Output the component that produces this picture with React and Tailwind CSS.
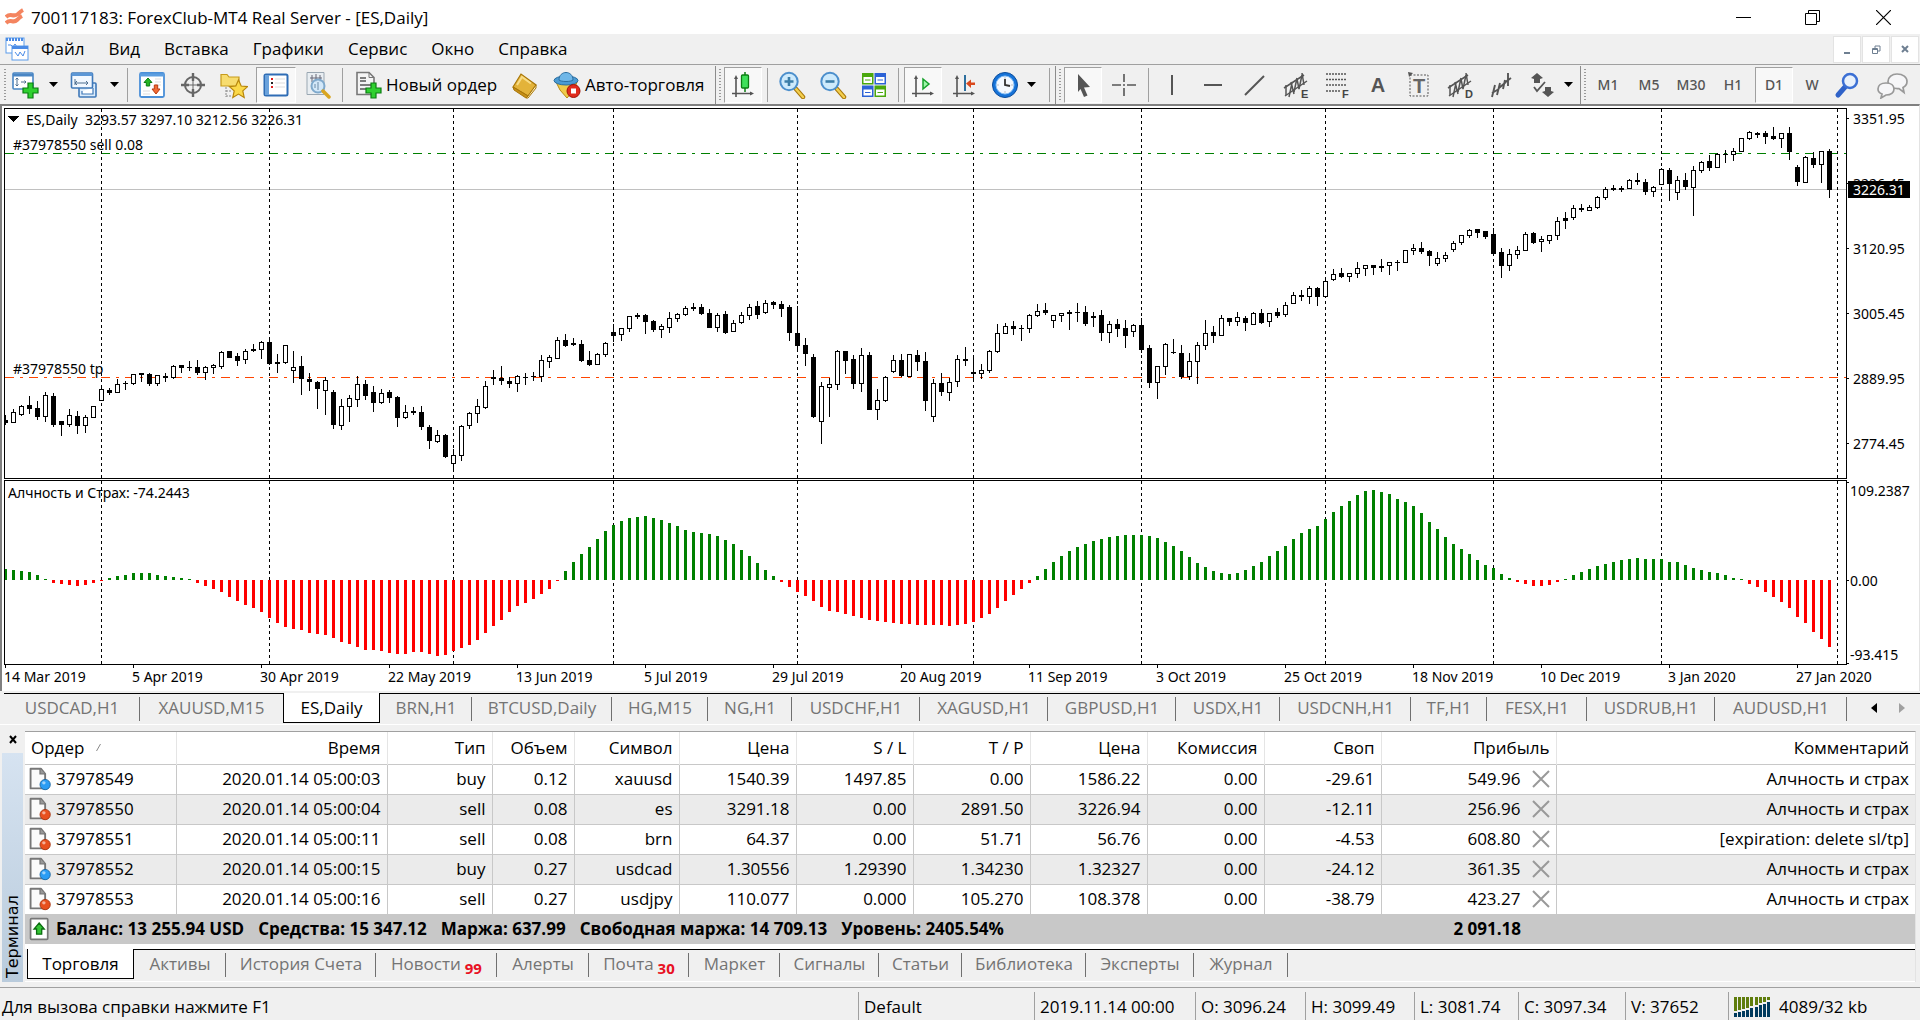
import { useState } from 'react';
import clsx from 'clsx';

// [high, bodyTop, bodyBottom, low, filled]
const CANDLES = [
  [415,420,423,425,1],[409,412,423,423,0],[405,406,415,416,0],[396,405,409,414,1],[401,408,417,420,1],[392,395,417,422,0],
  [393,396,425,427,1],[421,421,425,436,1],[409,415,425,427,0],[411,416,426,434,1],[415,417,426,433,0],[406,406,418,418,0],
  [387,389,401,401,0],[388,390,393,395,1],[379,384,393,393,0],[381,383,384,390,1],[374,374,384,385,0],[373,373,375,382,1],
  [373,374,384,386,1],[375,375,384,386,0],[373,376,378,382,1],[365,366,378,379,0],[365,365,368,373,1],[361,367,368,371,1],
  [360,367,373,375,1],[366,367,373,380,0],[364,365,368,374,0],[351,352,367,369,0],[351,351,358,358,1],[353,356,361,366,1],
  [349,351,360,364,0],[344,349,351,352,1],[341,342,350,359,0],[337,342,364,365,1],[354,362,364,373,1],[345,345,363,364,0],
  [351,367,371,383,0],[356,366,379,395,1],[373,379,382,391,1],[381,382,389,409,1],[377,380,391,415,0],[390,392,425,429,1],
  [399,406,426,430,0],[395,398,407,422,0],[376,384,400,407,0],[380,384,396,400,1],[386,392,403,412,1],[389,393,403,404,0],
  [390,392,398,403,1],[396,397,418,427,1],[405,412,418,419,0],[407,411,413,415,1],[406,412,427,430,1],[425,427,441,449,1],
  [430,435,442,443,0],[434,435,457,458,1],[449,455,464,470,0],[425,426,456,461,0],[412,413,426,429,0],[399,406,414,423,0],
  [381,386,408,409,0],[370,377,379,385,1],[366,378,381,385,1],[377,381,384,388,1],[375,376,384,392,0],[373,377,378,385,1],
  [372,376,377,381,1],[355,360,377,382,0],[355,357,362,368,0],[337,340,359,359,0],[334,340,346,347,1],[338,343,345,346,1],
  [340,344,361,362,1],[351,360,365,366,1],[353,354,365,365,0],[342,343,355,357,0],[324,332,336,342,1],[328,328,335,341,0],
  [316,316,329,332,0],[313,315,317,319,1],[314,315,322,334,1],[320,321,330,332,1],[324,326,330,338,0],[312,318,328,333,0],
  [313,314,319,322,0],[306,308,315,316,0],[303,307,309,311,1],[304,307,314,315,1],[309,313,328,328,1],[313,315,328,332,0],
  [311,314,333,334,1],[320,323,332,332,0],[312,315,323,324,0],[304,307,316,320,0],[301,306,315,319,1],[300,303,313,314,0],
  [301,302,305,309,1],[301,304,309,317,1],[305,307,333,341,1],[306,333,346,350,1],[338,345,354,366,1],[354,357,417,418,1],
  [382,386,422,444,0],[378,384,388,417,0],[350,351,385,390,0],[351,351,361,374,1],[355,359,384,389,1],[348,355,384,392,0],
  [352,355,410,410,1],[389,400,410,420,0],[376,377,401,402,0],[355,360,372,373,0],[354,360,376,377,1],[354,354,377,377,0],
  [350,355,362,371,1],[352,361,401,411,1],[379,383,417,422,0],[373,383,392,396,1],[378,382,393,401,0],[355,359,382,387,0],
  [347,359,361,366,1],[358,372,374,379,1],[364,370,374,379,0],[350,351,371,373,0],[324,333,352,353,0],[323,326,334,334,0],
  [321,326,329,335,1],[325,328,329,341,1],[314,315,329,333,0],[304,311,316,317,0],[303,310,313,315,1],[315,315,321,328,0],
  [313,313,316,322,0],[310,312,314,330,1],[303,312,313,322,1],[306,312,324,326,1],[312,316,318,327,1],[310,315,333,341,1],
  [321,324,333,343,0],[319,324,329,337,1],[320,328,336,348,1],[324,325,332,337,0],[318,325,350,353,1],[345,348,383,388,1],
  [366,366,383,399,0],[343,344,367,375,0],[339,352,353,354,1],[345,353,377,379,1],[353,361,377,380,0],[342,345,362,384,0],
  [320,333,346,350,0],[326,332,336,343,1],[315,318,336,336,0],[318,318,322,326,1],[312,317,322,326,0],[316,318,323,331,1],
  [312,313,325,325,0],[309,313,323,324,1],[313,313,322,327,0],[308,312,316,318,1],[302,305,315,317,0],[292,295,304,304,0],
  [290,295,297,301,1],[286,288,297,304,0],[287,288,297,306,1],[280,281,297,298,0],[269,274,280,281,0],[268,273,277,278,1],
  [273,273,277,282,0],[262,268,274,278,0],[265,265,269,276,0],[265,265,268,275,1],[259,266,268,272,1],[262,262,266,275,0],
  [260,262,263,271,1],[250,250,263,263,0],[244,248,251,255,0],[242,248,252,254,1],[250,251,256,266,1],[252,258,264,266,0],
  [252,255,259,262,0],[241,243,250,252,0],[235,235,243,245,0],[229,230,236,238,0],[229,229,233,238,1],[231,231,237,239,1],
  [228,234,254,255,1],[248,252,266,278,1],[249,254,266,271,0],[246,250,255,259,0],[232,234,251,251,0],[232,233,243,244,1],
  [236,239,242,252,0],[235,235,241,244,0],[217,221,236,240,0],[212,218,221,229,1],[205,208,218,220,0],[204,208,210,212,1],
  [205,207,211,211,0],[196,197,208,209,0],[187,189,198,200,0],[185,188,190,191,1],[186,188,190,192,1],[179,180,189,189,0],
  [173,180,182,185,1],[179,182,192,195,1],[186,187,192,197,0],[168,169,185,185,0],[168,170,184,201,1],[176,180,193,200,0],
  [173,180,187,190,1],[166,170,188,216,0],[161,162,171,173,0],[155,161,168,171,1],[153,154,168,168,0],[150,154,155,163,1],
  [148,151,155,161,0],[138,138,152,152,0],[131,132,139,140,0],[132,133,135,138,1],[131,133,137,144,1],[127,136,139,140,1],
  [133,133,139,148,0],[127,133,152,160,1],[165,167,182,186,1],[156,157,183,183,0],[152,158,165,168,1],[151,151,165,183,0],
  [149,151,190,198,1],
];

const HISTOGRAM = [
  11,10,9,8,5,1,-3,-4,-5,-6,-5,-3,-1,2,4,5,7,7,7,5,4,3,2,1,-3,-6,-9,-12,-17,-21,-25,-28,-32,-38,-43,-47,-49,-50,-53,-54,
  -55,-58,-62,-64,-67,-70,-70,-71,-73,-74,-74,-72,-72,-74,-76,-75,-71,-68,-65,-60,-53,-46,-40,-32,-26,-23,-19,-14,-9,-1,
  9,18,26,33,41,49,55,59,62,63,64,62,60,57,54,50,48,47,46,44,40,36,30,24,17,10,4,-2,-7,-12,-16,-21,-27,-31,-32,-34,-36,
  -38,-40,-41,-42,-43,-44,-44,-45,-45,-45,-45,-46,-45,-44,-42,-38,-34,-28,-21,-15,-9,-3,4,11,18,24,29,33,36,39,41,43,44,45,45,
  45,44,42,38,34,29,23,17,13,9,7,6,7,10,14,18,24,29,34,41,47,51,54,61,68,74,79,85,89,90,88,86,81,78,74,67,58,51,43,36,
  31,26,20,15,12,6,2,-2,-4,-6,-6,-5,-2,1,5,8,11,14,16,18,20,21,22,21,21,21,18,18,15,12,10,8,7,5,2,1,-4,-7,-12,-17,-22,
  -28,-37,-43,-52,-59,-67,
];

const PERIODS = [12, 33, 56, 76, 99, 121, 142, 165, 186, 207, 229];
const PRICES = [['3351.95', 118], ['3226.45', 183], ['3120.95', 248], ['3005.45', 313], ['2889.95', 378], ['2774.45', 443]];
const DATES = ['14 Mar 2019', '5 Apr 2019', '30 Apr 2019', '22 May 2019', '13 Jun 2019', '5 Jul 2019', '29 Jul 2019', '20 Aug 2019',
  '11 Sep 2019', '3 Oct 2019', '25 Oct 2019', '18 Nov 2019', '10 Dec 2019', '3 Jan 2020', '27 Jan 2020'];

const MENU = ['Файл', 'Вид', 'Вставка', 'Графики', 'Сервис', 'Окно', 'Справка'];

const CHART_TABS = [
  ['USDCAD,H1', 'w-[136px]'], ['XAUUSD,M15', 'w-[143px]'], ['ES,Daily', 'w-[97px]'], ['BRN,H1', 'w-[92px]'],
  ['BTCUSD,Daily', 'w-[140px]'], ['HG,M15', 'w-[96px]'], ['NG,H1', 'w-[84px]'], ['USDCHF,H1', 'w-[128px]'],
  ['XAGUSD,H1', 'w-[128px]'], ['GBPUSD,H1', 'w-[128px]'], ['USDX,H1', 'w-[104px]'], ['USDCNH,H1', 'w-[131px]'],
  ['TF,H1', 'w-[76px]'], ['FESX,H1', 'w-[100px]'], ['USDRUB,H1', 'w-[128px]'], ['AUDUSD,H1', 'w-[132px]'],
];

const TERMINAL_TABS = [
  ['Торговля', 'w-[107px]'], ['Активы', 'w-[92px]'], ['История Счета', 'w-[150px]'], ['Новости', 'w-[121px]', '99'],
  ['Алерты', 'w-[92px]'], ['Почта', 'w-[100px]', '30'], ['Маркет', 'w-[91px]'], ['Сигналы', 'w-[99px]'],
  ['Статьи', 'w-[83px]'], ['Библиотека', 'w-[124px]'], ['Эксперты', 'w-[108px]'], ['Журнал', 'w-[94px]'],
];

const COLUMNS = [
  ['Ордер', 'w-[151px]'], ['Время', 'w-[211px]'], ['Тип', 'w-[105px]'], ['Объем', 'w-[82px]'], ['Символ', 'w-[105px]'],
  ['Цена', 'w-[117px]'], ['S / L', 'w-[117px]'], ['T / P', 'w-[117px]'], ['Цена', 'w-[117px]'], ['Комиссия', 'w-[117px]'],
  ['Своп', 'w-[117px]'], ['Прибыль', 'w-[175px]'], ['Комментарий', ''],
];

const ORDERS = [
  ['37978549', '2020.01.14 05:00:03', 'buy', '0.12', 'xauusd', '1540.39', '1497.85', '0.00', '1586.22', '0.00', '-29.61', '549.96', 'Алчность и страх'],
  ['37978550', '2020.01.14 05:00:04', 'sell', '0.08', 'es', '3291.18', '0.00', '2891.50', '3226.94', '0.00', '-12.11', '256.96', 'Алчность и страх'],
  ['37978551', '2020.01.14 05:00:11', 'sell', '0.08', 'brn', '64.37', '0.00', '51.71', '56.76', '0.00', '-4.53', '608.80', '[expiration: delete sl/tp]'],
  ['37978552', '2020.01.14 05:00:15', 'buy', '0.27', 'usdcad', '1.30556', '1.29390', '1.34230', '1.32327', '0.00', '-24.12', '361.35', 'Алчность и страх'],
  ['37978553', '2020.01.14 05:00:16', 'sell', '0.27', 'usdjpy', '110.077', '0.000', '105.270', '108.378', '0.00', '-38.79', '423.27', 'Алчность и страх'],
];

/* ---------- Icons ---------- */

const Svg = ({ size = 'size-7', children }) => (
  <svg viewBox="0 0 28 28" className={clsx('block shrink-0', size)} fill="none" aria-hidden="true">{children}</svg>
);

const plus = <path d="M17 12h5v5h5v5h-5v5h-5v-5h-5v-5h5z" fill="#2fd02f" stroke="#0b7d12" strokeWidth="1.2" />;
const axes = (
  <g stroke="#555" strokeWidth="1.6" fill="#555">
    <path d="M7 26V6M3 22.500H23" fill="none" />
    <path d="M7 4l-2 4h4zM25 22.500l-4-2v4z" stroke="none" />
  </g>
);
const channel = (
  <g stroke="#555" strokeWidth="1.5">
    <path d="M2 17L22 4M3 25L25 10" />
    <path d="M4 14v10M7 26l3-14M9 11l3 12M12 21l3-14M15 8l2 10M17 18l3-14M20 2l2 12" />
  </g>
);

const NewChartIcon = () => (
  <Svg>
    <rect x="2" y="2" width="20" height="16" rx="1" fill="#fff" stroke="#4a86c4" strokeWidth="1.6" />
    <path d="M2 4h20" stroke="#4a86c4" strokeWidth="3" />
    <path d="M6 7v8M4.500 8.500L6 7l1.500 1.500M4.500 13.500L6 15l1.500-1.500M10 11h5M13.500 9.500L15 11l-1.500 1.500" stroke="#4f6f8f" />
    {plus}
  </Svg>
);
const ProfilesIcon = () => (
  <Svg>
    <rect x="9" y="12" width="17" height="14" rx="1" fill="#dcecfb" stroke="#3f78b8" strokeWidth="1.6" />
    <path d="M12 20v3h11v-6" stroke="#3f78b8" strokeWidth="1.2" fill="#fff" />
    <rect x="1.500" y="2" width="21" height="15" rx="1" fill="#f2f8ff" stroke="#3f78b8" strokeWidth="1.600" />
    <path d="M1.500 3.500h21" stroke="#5c97d6" strokeWidth="3" />
    <path d="M5 8v6M5 12h13M16 10l2 2-2 2M7 10l-2 2 2 2" stroke="#4f6f8f" />
  </Svg>
);
const MarketIcon = () => (
  <Svg>
    <rect x="2" y="2" width="24" height="24" rx="1.500" fill="#fff" stroke="#4a8fd8" strokeWidth="1.800" />
    <path d="M2 4h24" stroke="#5c9ee0" strokeWidth="3" />
    <path d="M17 8h6M17 11h6M5 20h7M5 23h7M17 14h6" stroke="#ddd" />
    <path d="M10 7l4 4.500h-2.300v3.500H8.300v-3.500H6z" fill="#25b525" stroke="#0b7d12" />
    <path d="M16.300 14h3.400v4h2.300l-4 5-4-5h2.300z" fill="#f06a35" stroke="#b83a10" />
  </Svg>
);
const CrosshairIcon = () => (
  <Svg>
    <circle cx="14" cy="14" r="8" stroke="#666" strokeWidth="2" />
    <path d="M14 2v8M14 18v8M2 14h8M18 14h8" stroke="#666" strokeWidth="2.400" />
    <path d="M14 10v8M10 14h8" stroke="#666" />
  </Svg>
);
const NavigatorIcon = () => (
  <Svg>
    <path d="M1 3.500h6l2 2.500h10v9H1z" fill="#f7dc6f" stroke="#c79b1b" strokeWidth="1.200" />
    <path d="M6 16v10M6 20h6M6 25h6" stroke="#888" strokeDasharray="2 1" />
    <path d="M18.500 9l2.700 6 6.300.6-4.700 4.300 1.400 6.600-5.700-3.400-5.700 3.400 1.400-6.600-4.700-4.300 6.300-.6z" fill="#fbd94a" stroke="#b8860b" strokeWidth="1.200" />
  </Svg>
);
const TerminalIcon = () => (
  <Svg>
    <rect x="2.500" y="3.500" width="23" height="21" rx="1.500" fill="#fff" stroke="#2f6db5" strokeWidth="2" />
    <path d="M5 4v20" stroke="#6aa2dc" strokeWidth="4" />
    <path d="M9 8h2M9 16h2" stroke="#e02020" strokeWidth="2" />
    <path d="M9 12h2" stroke="#222" strokeWidth="2" />
    <path d="M13 8h10M13 12h10M13 16h10" stroke="#ddd" />
  </Svg>
);
const TesterIcon = () => (
  <Svg>
    <path d="M3 1.500h17v22H3z" fill="#e9eef2" stroke="#9aa7b2" />
    <path d="M8 4v7M12 3v8M16 4v7M6 7h12" stroke="#667" />
    <circle cx="14" cy="15" r="6.500" fill="#cfe6fa" fillOpacity=".85" stroke="#7fa9cc" strokeWidth="2" />
    <path d="M14 11v8M11 13v4" stroke="#6d8aa5" />
    <path d="M19 20l6 6" stroke="#d9a520" strokeWidth="3.500" strokeLinecap="round" />
  </Svg>
);
const NewOrderIcon = () => (
  <Svg>
    <path d="M3 1.500h12l5 5v17H3z" fill="#f4f4f4" stroke="#777" strokeWidth="1.600" />
    <path d="M15 1.500v5h5" stroke="#777" />
    <path d="M6 7h6M6 10h6M6 14h11M6 18h6" stroke="#555" strokeWidth="1.600" />
    {plus}
  </Svg>
);
const EditorIcon = () => (
  <Svg>
    <path d="M2 16L10 3l15 11-8 11z" fill="#e3b33a" stroke="#a87608" strokeWidth="1.200" />
    <path d="M2 16l1 3 12 8 2-2z" fill="#c68f17" stroke="#a87608" />
    <path d="M15 27l2-2 8-11v3l-8 10z" fill="#fff3c4" stroke="#a87608" />
    <path d="M6 14l5-8 9 6.500" stroke="#f8dc86" strokeWidth="2" />
  </Svg>
);
const ExpertIcon = () => (
  <Svg>
    <path d="M3 11h21l-3 8-7 8-7-8z" fill="#f0cb4a" stroke="#b98a12" />
    <ellipse cx="13" cy="9.500" rx="12" ry="4.500" fill="#4b9bd3" stroke="#2b6ea0" />
    <path d="M6 9c0-10 14-10 14 0-2 2-12 2-14 0z" fill="#6fb7e8" stroke="#2b6ea0" />
    <circle cx="20.500" cy="20" r="6.500" fill="#e02b1d" stroke="#a01208" />
    <rect x="18" y="17.500" width="5" height="5" fill="#fff" />
  </Svg>
);
const CandleIcon = () => (
  <Svg>
    {axes}
    <path d="M16 1v20" stroke="#0b7d12" strokeWidth="1.500" />
    <rect x="12.500" y="4" width="7" height="13" rx="1" fill="#3fe05a" stroke="#0b7d12" strokeWidth="1.300" />
  </Svg>
);
const ZoomIcon = ({ sign }) => (
  <Svg>
    <path d="M18 18l7 8" stroke="#a87608" strokeWidth="4.500" strokeLinecap="round" />
    <path d="M18 18l7 8" stroke="#f3cf4f" strokeWidth="2.500" strokeLinecap="round" />
    <circle cx="11" cy="10.500" r="8.700" fill="#cdeafc" stroke="#4c8fcc" strokeWidth="2" />
    <path d={sign} stroke="#3c7ea8" strokeWidth="2.600" />
  </Svg>
);
const TileIcon = () => (
  <Svg>
    {[[2, 2, '#4aa80c'], [14.500, 2, '#2c62d6'], [2, 14.500, '#2c62d6'], [14.500, 14.500, '#4aa80c']].map(([x, y, c]) => (
      <g key={`${x}-${y}`}>
        <rect x={x} y={y} width="11.500" height="11.500" fill={c} />
        <rect x={x + 1.500} y={y + 4} width="8.500" height="6" fill="#fff" />
        <path d={`M${x + 3} ${y + 7}h5.500`} stroke={c} />
      </g>
    ))}
  </Svg>
);
const ScrollIcon = () => (
  <Svg>{axes}<path d="M14 8l6 5-6 5z" fill="#9df5a8" stroke="#15a02a" strokeWidth="1.500" /></Svg>
);
const ShiftIcon = () => (
  <Svg>
    {axes}
    <path d="M15 4v16" stroke="#2d6f9e" strokeWidth="2" />
    <path d="M16 12.500l5-4v3h4v2.500h-4v3z" fill="#d9481c" />
  </Svg>
);
const ClockIcon = () => (
  <Svg>
    <circle cx="14" cy="14" r="12.500" fill="#1673d8" stroke="#0b4c9c" />
    <circle cx="14" cy="14" r="9" fill="#f4f9ff" stroke="#8fc3f5" />
    <path d="M14 8v6l5 1" stroke="#333" strokeWidth="1.800" />
    <path d="M14 6.500v1M14 20.500v1M6.500 14h1M20.500 14h1" stroke="#888" />
  </Svg>
);
const CursorIcon = () => <Svg><path d="M9 3l12 13-6 .5 3.500 8-3.500 1.500-3.500-8L9 21z" fill="#555" /></Svg>;
const CrossIcon = () => <Svg><path d="M14 3v8M14 17v8M2 14h9M17 14h9M13 14h2" stroke="#555" strokeWidth="1.600" /></Svg>;
const VLineIcon = () => <Svg><path d="M13 4v20" stroke="#555" strokeWidth="2" /></Svg>;
const HLineIcon = () => <Svg><path d="M4 14h18" stroke="#555" strokeWidth="2" /></Svg>;
const TrendIcon = () => <Svg><path d="M4 24L23 5" stroke="#555" strokeWidth="2" /></Svg>;
const Letter = ({ children }) => (
  <text x="19" y="27" fontSize="11" fontWeight="700" fill="#444" className="font-['Liberation_Sans',sans-serif]">{children}</text>
);
const ChannelIcon = ({ letter }) => <Svg>{channel}<Letter>{letter}</Letter></Svg>;
const FiboIcon = () => (
  <Svg>
    <path d="M3 3h21M3 8.500h21M3 14h21M3 20h14" stroke="#555" strokeWidth="1.500" strokeDasharray="2 1" />
    <Letter>F</Letter>
  </Svg>
);
const LabelIcon = () => (
  <Svg>
    <rect x="5" y="4" width="18" height="21" stroke="#555" strokeDasharray="2 1.500" />
    <path d="M3 1l5 1-4 4z" fill="#555" />
    <text x="14" y="22" fontSize="20" fontWeight="700" fill="#666" textAnchor="middle" className="font-['Liberation_Sans',sans-serif]">T</text>
  </Svg>
);
const GannIcon = () => (
  <Svg><path d="M5 26l3-12M5 22l7-4M10 24l3-12M12 17l7-6M16 18l2-9M17 12l7-5M21 15V2" stroke="#555" strokeWidth="1.900" /></Svg>
);
const ShapesIcon = () => (
  <Svg>
    <path d="M9 2l6 5-3 1v4H6V8L3 7z" fill="#555" />
    <path d="M20 26l-6-5 3-1v-4h6v4l3 1z" fill="#555" />
    <path d="M6 16l3 4 8-9" stroke="#555" strokeWidth="1.800" />
  </Svg>
);
const SearchIcon = () => (
  <Svg>
    <path d="M12 16l-7 8" stroke="#2f62c8" strokeWidth="5" strokeLinecap="round" />
    <circle cx="17" cy="10" r="7" fill="#e9f1fb" stroke="#3b6fd4" strokeWidth="2.500" />
  </Svg>
);
const ChatIcon = () => (
  <svg viewBox="0 0 34 28" className="block h-7 w-[34px] shrink-0" fill="#f6f6f8" stroke="#999" strokeWidth="1.700" aria-hidden="true">
    <path d="M22 3c6 0 10 3 10 7.500 0 3-2 5-4 6l1 5-5-4C17 18 13 15 13 10.500S17 3 22 3z" />
    <path d="M11 12c5 0 8 2.500 8 6s-3 6-8 6l-5 3 1-4c-3-1-4-3-4-5 0-3.500 3-6 8-6z" />
  </svg>
);
const OrderIcon = ({ side }) => (
  <Svg size="size-6">
    <path d="M3 2h12l5 6v17H3z" fill="#fbfbfb" stroke="#777" strokeWidth="2.200" strokeLinejoin="round" />
    <path d="M14 2v6h6" fill="#999" stroke="#777" strokeWidth="1.500" />
    <circle cx="20" cy="20.500" r="6" fill={side === 'buy' ? '#2a9df4' : '#e8501e'} stroke={side === 'buy' ? '#14609c' : '#a02f0a'} />
    <circle cx="18.500" cy="18.500" r="2" fill="#fff" fillOpacity=".55" />
  </Svg>
);

/* ---------- Toolbar ---------- */

const ToolButton = ({ label, pressed, className = 'w-[38px]', children }) => (
  <button
    type="button"
    aria-label={label}
    aria-pressed={pressed}
    className={clsx(
      'flex h-9 shrink-0 items-center justify-center border',
      pressed ? 'border-t-[#a0a0a0] border-l-[#a0a0a0] border-r-white border-b-white bg-[#f8f8f8]' : 'border-transparent',
      className,
    )}
  >
    {children}
  </button>
);

const DropArrow = ({ label, className }) => (
  <button type="button" aria-label={label} className={clsx('flex h-9 shrink-0 items-center', className)}>
    <svg width="9" height="5" aria-hidden="true"><path d="M0 0h9L4.500 5z" fill="#000" /></svg>
  </button>
);

const Sep = () => <span className="mx-[2px] h-[34px] w-px shrink-0 bg-[#a0a0a0]" />;
const BandEnd = () => <span className="h-[38px] w-px shrink-0 bg-[#8c8c8c]" />;
const Grip = () => <span className="h-8 w-[2px] shrink-0 bg-[repeating-linear-gradient(#9a9a9a_0_1px,#f0f0f0_1px_3px)]" />;

const FRAMES = [['M1', 'w-[38px]'], ['M5', 'w-[38px]'], ['M30', 'w-10'], ['H1', 'w-[38px]'], ['D1', 'w-[38px]'], ['W', 'w-8']];

const Toolbar = () => {
  const [frame, setFrame] = useState('D1');

  return (
    <div className="flex h-10 items-center gap-[3px] overflow-hidden border-t border-[#a0a0a0] bg-[#f0f0f0] pl-1">
      <Grip />
      <ToolButton label="Новый график" className="w-8"><NewChartIcon /></ToolButton>
      <DropArrow label="Список символов" className="w-[18px] justify-center" />
      <ToolButton label="Профили"><ProfilesIcon /></ToolButton>
      <DropArrow label="Список профилей" className="w-4 justify-center" />
      <Sep />
      <ToolButton label="Обзор рынка"><MarketIcon /></ToolButton>
      <ToolButton label="Окно данных"><CrosshairIcon /></ToolButton>
      <ToolButton label="Навигатор"><NavigatorIcon /></ToolButton>
      <ToolButton label="Терминал" pressed className="w-10"><TerminalIcon /></ToolButton>
      <ToolButton label="Тестер стратегий"><TesterIcon /></ToolButton>
      <Sep />
      <button type="button" className="flex h-9 w-[155px] shrink-0 items-center gap-1 pl-[6px] text-[17px] whitespace-nowrap">
        <NewOrderIcon />Новый ордер
      </button>
      <ToolButton label="MetaEditor"><EditorIcon /></ToolButton>
      <button type="button" className="flex h-9 w-[165px] shrink-0 items-center gap-1 pl-[6px] text-[17px] whitespace-nowrap">
        <ExpertIcon />Авто-торговля
      </button>
      <BandEnd />

      <Grip />
      <ToolButton label="Свечи" pressed><CandleIcon /></ToolButton>
      <Sep />
      <ToolButton label="Увеличить"><ZoomIcon sign="M11 6v9M6.500 10.500h9" /></ToolButton>
      <ToolButton label="Уменьшить"><ZoomIcon sign="M6.500 10.500h9" /></ToolButton>
      <ToolButton label="Окна мозаикой"><TileIcon /></ToolButton>
      <Sep />
      <ToolButton label="Автопрокрутка" pressed><ScrollIcon /></ToolButton>
      <ToolButton label="Сдвиг графика"><ShiftIcon /></ToolButton>
      <ToolButton label="Периодичность"><ClockIcon /></ToolButton>
      <DropArrow label="Список периодов" className="w-[17px]" />
      <Sep />
      <BandEnd />

      <Grip />
      <ToolButton label="Курсор" pressed><CursorIcon /></ToolButton>
      <ToolButton label="Перекрестие"><CrossIcon /></ToolButton>
      <Sep />
      <ToolButton label="Вертикальная линия"><VLineIcon /></ToolButton>
      <ToolButton label="Горизонтальная линия"><HLineIcon /></ToolButton>
      <ToolButton label="Трендовая линия"><TrendIcon /></ToolButton>
      <ToolButton label="Равноудаленный канал"><ChannelIcon letter="E" /></ToolButton>
      <ToolButton label="Линии Фибоначчи"><FiboIcon /></ToolButton>
      <ToolButton label="Текст"><span className="font-['Liberation_Sans',sans-serif] text-xl font-bold text-[#555]">A</span></ToolButton>
      <ToolButton label="Текстовая метка"><LabelIcon /></ToolButton>
      <ToolButton label="Канал отклонений"><ChannelIcon letter="D" /></ToolButton>
      <ToolButton label="Циклические линии"><GannIcon /></ToolButton>
      <ToolButton label="Стрелки"><ShapesIcon /></ToolButton>
      <DropArrow label="Список стрелок" className="w-[13px]" />
      <BandEnd />

      <Grip />
      {FRAMES.map(([name, width]) => (
        <button
          key={name}
          type="button"
          onClick={() => setFrame(name)}
          className={clsx(
            'flex h-9 shrink-0 items-center justify-center border font-["Noto_Sans",sans-serif] text-sm font-medium text-[#555]',
            width,
            frame === name ? 'border-t-[#a0a0a0] border-l-[#a0a0a0] border-r-white border-b-white bg-[#f8f8f8]' : 'border-transparent',
          )}
        >
          {name}
        </button>
      ))}
      <ToolButton label="Поиск" className="w-8"><SearchIcon /></ToolButton>
      <ToolButton label="Сообщения" className="w-[52px]"><ChatIcon /></ToolButton>
    </div>
  );
};

/* ---------- Chart ---------- */

const cx = (i) => 5 + 8 * i;

const Chart = () => (
  <div className="border-t-2 border-r border-l-2 border-t-[#808080] border-r-[#e3e3e3] border-l-[#808080] bg-white">
    <svg viewBox="2 106 1917 585" className='block w-full font-["Noto_Sans",sans-serif] text-[14px]' shapeRendering="crispEdges" role="img" aria-label="ES,Daily">
      {/* Horizontal levels */}
      <path d="M5 189.5H1846" stroke="#c0c0c0" />
      <path d="M5 153.5H1846" stroke="#008000" strokeDasharray="9 6 3 6" />
      <path d="M5 377.5H1846" stroke="#ff4500" strokeDasharray="9 6 3 6" />

      {/* Period separators */}
      {PERIODS.map((i) => (
        <path key={i} d={`M${cx(i) + 0.5} 109V478M${cx(i) + 0.5} 481V664`} stroke="#000" strokeDasharray="3 3" />
      ))}

      {/* Candles */}
      {CANDLES.map(([high, top, bottom, low, filled], i) => (
        <g key={i}>
          <rect x={cx(i)} y={high} width="1" height={low - high} />
          <rect x={i ? cx(i) - 2 : 5} y={top} width={i ? 5 : 3} height={bottom - top} />
          {!filled && <rect x={cx(i) - 1} y={top + 1} width="3" height={bottom - top - 2} fill="#fff" />}
        </g>
      ))}

      {/* Indicator */}
      {HISTOGRAM.map((v, i) => (
        <rect key={i} x={i ? cx(i) - 1 : 5} y={v > 0 ? 580 - v : 580} width={i ? 3 : 2} height={Math.abs(v)} fill={v > 0 ? '#008000' : '#ff0000'} />
      ))}

      {/* Frames */}
      <g fill="none" stroke="#000">
        <path d="M4.5 108.5H1846.5V478.5H4.5zM4.500 480.500H1846.500V664.500H4.500z" />
        {PRICES.map(([label, y]) => <path key={label} d={`M1847 ${y + 0.5}h2`} />)}
        <path d="M1847 482.500h2M1847 580.500h2M1847 663.500h2" />
        {DATES.map((label, i) => <path key={label} d={`M${5.5 + 128 * i} 665v3`} />)}
      </g>

      <path d="M8 116h11l-5.500 6z" />
      <text x="26" y="125" xmlSpace="preserve">ES,Daily  3293.57 3297.10 3212.56 3226.31</text>
      <text x="13" y="150">#37978550 sell 0.08</text>
      <text x="13" y="374">#37978550 tp</text>
      <text x="8" y="498">Алчность и Страх: -74.2443</text>

      {PRICES.map(([label, y]) => <text key={label} x="1853" y={y + 6}>{label}</text>)}
      <rect x="1848" y="181" width="62" height="17" />
      <text x="1853" y="195" fill="#fff">3226.31</text>
      <text x="1850" y="496">109.2387</text>
      <text x="1850" y="586">0.00</text>
      <text x="1850" y="660">-93.415</text>
      {DATES.map((label, i) => <text key={label} x={4 + 128 * i} y="682">{label}</text>)}
    </svg>
  </div>
);

/* ---------- Tabs ---------- */

const TabStrip = ({ tabs, active, onSelect, children }) => (
  <div className="flex h-[31px] items-start border-t border-black bg-[#f0f0f0] text-[17px]" role="tablist">
    {tabs.map(([name, width, badge], i) => (
      <button
        key={name}
        type="button"
        role="tab"
        aria-selected={name === active}
        onClick={() => onSelect(name)}
        className={clsx(
          'relative flex shrink-0 items-center justify-center whitespace-nowrap',
          width,
          name === active ? '-mt-px h-[30px] border border-t-0 border-black bg-white text-black' : 'h-7 text-[#747474]',
        )}
      >
        {name}
        {badge && <span className="ml-1 translate-y-1 text-[15px] font-bold text-[#e81123]">{badge}</span>}
        {name !== active && tabs[i + 1]?.[0] !== active && <span className="absolute top-[3px] right-0 h-6 w-px bg-[#707070]" />}
      </button>
    ))}
    {children}
  </div>
);

/* ---------- Terminal ---------- */

const Terminal = () => {
  const [tab, setTab] = useState('Торговля');

  return (
    <div className="flex bg-[#f0f0f0] pt-[6px]">
      <div className="flex w-[25px] shrink-0 flex-col items-center">
        <button type="button" aria-label="Закрыть" className="flex h-[22px] items-start pt-1">
          <svg width="8" height="9" aria-hidden="true"><path d="M1 1l6 7M7 1L1 8" stroke="#000" strokeWidth="2" /></svg>
        </button>
        <div className="flex w-[21px] flex-1 rotate-180 items-center justify-center bg-gradient-to-b from-[#b9cbdc] to-[#d6e3f1]">
          <span className="self-start pt-1 font-['DejaVu_Sans',sans-serif] text-[16px] leading-5 [writing-mode:vertical-rl]">Терминал</span>
        </div>
      </div>

      <div className="mr-1 min-w-0 flex-1 border-t border-r border-t-[#a0a0a0] border-r-[#e3e3e3] bg-white">
        <table className="w-full table-fixed border-collapse text-[17px]">
          <thead>
            <tr className="h-8 border-b border-[#c8c8c8]">
              {COLUMNS.map(([name, width], i) => (
                <th
                  key={i}
                  scope="col"
                  className={clsx('border-r border-[#e5e5e5] py-0 pr-[6px] pl-[5px] font-normal last:border-r-0', width, i === 0 ? 'text-left' : 'text-right')}
                >
                  {i === 0 ? (
                    <span className="flex items-center gap-3 pl-px">
                      {name}
                      <svg width="5" height="7" aria-hidden="true"><path d="M4.500 0L.5 7" stroke="#888" /></svg>
                    </span>
                  ) : name}
                </th>
              ))}
            </tr>
          </thead>
          <tbody>
            {ORDERS.map((row) => (
              <tr key={row[0]} className="h-[30px] border-b border-[#c8c8c8] last:border-b-0 even:bg-[#ebebeb]">
                {row.map((cell, i) => (
                  <td key={i} className="border-r border-[#c8c8c8] py-0 pr-[6px] pl-1 text-right leading-6 whitespace-nowrap last:border-r-0">
                    {i === 0 && <span className="-ml-px flex items-center gap-1"><OrderIcon side={row[2]} />{cell}</span>}
                    {i === 11 && (
                      <span className="flex items-center justify-end gap-[11px]">
                        {cell}
                        <button type="button" aria-label={`Закрыть ${row[0]}`}>
                          <svg width="18" height="18" aria-hidden="true"><path d="M1 1l16 16M17 1L1 17" stroke="#999" strokeWidth="2" /></svg>
                        </button>
                      </span>
                    )}
                    {i !== 0 && i !== 11 && cell}
                  </td>
                ))}
              </tr>
            ))}
          </tbody>
          <tfoot>
            <tr className="h-[30px] bg-[#c8c8c8] leading-6 font-bold">
              <td colSpan={11} className="py-0 pl-1 whitespace-nowrap">
                <span className="-ml-px flex items-center gap-1">
                  <Svg size="size-6">
                    <rect x="3" y="2" width="20" height="24" rx="1" fill="#fff" stroke="#777" strokeWidth="2" />
                    <path d="M13 7l6 7h-3v6h-6v-6H7z" fill="#35c435" stroke="#0b6d10" strokeWidth="1.500" />
                  </Svg>
                  <span className="flex gap-[14px]">
                    <span>Баланс: 13 255.94 USD</span>
                    <span>Средства: 15 347.12</span>
                    <span>Маржа: 637.99</span>
                    <span>Свободная маржа: 14 709.13</span>
                    <span>Уровень: 2405.54%</span>
                  </span>
                </span>
              </td>
              <td className="py-0 pr-[35px] text-right whitespace-nowrap">2 091.18</td>
              <td />
            </tr>
          </tfoot>
        </table>

        <div className="mt-[5px] border-b border-white bg-[#f0f0f0] pb-px pl-[2px]">
          <TabStrip tabs={TERMINAL_TABS} active={tab} onSelect={setTab} />
        </div>
      </div>
    </div>
  );
};

/* ---------- Status bar ---------- */

const StatusCell = ({ width, children }) => (
  <div className={clsx('mt-1 flex shrink-0 items-center border-l border-[#a0a0a0] pl-[5px] whitespace-nowrap', width)}>{children}</div>
);

const StatusBar = () => (
  <div className="flex h-[35px] border-t border-[#a0a0a0] bg-[#f0f0f0] pb-px text-[17px]">
    <div className="mt-1 flex min-w-0 flex-1 items-center pl-[2px]">Для вызова справки нажмите F1</div>
    <StatusCell width="w-[176px]">Default</StatusCell>
    <StatusCell width="w-[161px]">2019.11.14 00:00</StatusCell>
    <StatusCell width="w-[110px]">O: 3096.24</StatusCell>
    <StatusCell width="w-[109px]">H: 3099.49</StatusCell>
    <StatusCell width="w-[104px]">L: 3081.74</StatusCell>
    <StatusCell width="w-[107px]">C: 3097.34</StatusCell>
    <StatusCell width="w-[103px]">V: 37652</StatusCell>
    <StatusCell width="w-[192px]">
      <svg width="38" height="20" className="mr-[7px] shrink-0" shapeRendering="crispEdges" aria-hidden="true">
        {[14, 13, 12, 11, 9, 8, 6, 5, 3].map((h, i) => (
          <g key={i}>
            <rect x={i * 4 + (i > 4 ? 1 : 0)} y="0" width="3" height={h} fill="#5f7d0c" />
            <rect x={i * 4 + (i > 4 ? 1 : 0)} y={h + 2} width="3" height={18 - h} fill="#003a5d" />
          </g>
        ))}
      </svg>
      4089/32 kb
    </StatusCell>
  </div>
);

/* ---------- Window ---------- */

const mdi = 'flex h-[27px] w-7 items-center justify-center border border-[#e3e3e3] bg-white';

const TitleBar = () => (
  <div className="flex h-[34px] items-center bg-white pl-[5px] text-[17px]">
    <svg width="20" height="18" fill="none" stroke="#f4845f" strokeWidth="4" aria-hidden="true">
      <path d="M1 9c5-5 7 1 12-3 2-2 3-3 5-4M1 15c5-5 7 1 11-3 2-2 3-3 5-4" />
    </svg>
    <h1 className="ml-[6px] flex-1 pt-px">700117183: ForexClub-MT4 Real Server - [ES,Daily]</h1>
    <button type="button" aria-label="Свернуть" className="flex h-[34px] w-[70px] items-center justify-center">
      <svg width="15" height="15" aria-hidden="true"><path d="M0 7.500h15" stroke="#000" /></svg>
    </button>
    <button type="button" aria-label="Восстановить" className="flex h-[34px] w-[68px] items-center justify-center">
      <svg width="15" height="15" fill="none" stroke="#000" aria-hidden="true"><path d="M.5 3.500h11v11H.5zM3.500 3V.5h11v11H12" /></svg>
    </button>
    <button type="button" aria-label="Закрыть" className="flex h-[34px] w-[74px] items-center justify-center">
      <svg width="15" height="15" aria-hidden="true"><path d="M0 0l15 15M15 0L0 15" stroke="#000" strokeWidth="1.200" /></svg>
    </button>
  </div>
);

const MenuBar = () => (
  <nav className="flex h-[30px] items-center bg-[#f0f0f0] pl-[5px] text-[17px]">
    <svg width="24" height="24" fill="none" aria-hidden="true">
      <rect x="1" y="1" width="18" height="15" fill="#fff" stroke="#5b9bea" />
      <path d="M1 2.500h18" stroke="#4a8be6" strokeWidth="3" strokeDasharray="2 1" />
      <path d="M3 8h3l2 2 2-3 2 3" stroke="#4a8be6" />
      <rect x="7" y="9" width="16" height="14" fill="#fff" stroke="#5b9bea" />
      <path d="M7 10.500h16" stroke="#4a8be6" strokeWidth="3" />
      <path d="M10 15l3 4 2-4 3 4 2-5" stroke="#4a8be6" />
    </svg>
    <div className="flex flex-1">
      {MENU.map((item) => <button key={item} type="button" className="px-3">{item}</button>)}
    </div>
    <div className="flex gap-px pr-px text-[#6e7f91]">
      <button type="button" aria-label="Свернуть окно" className={mdi}>
        <svg width="8" height="10" aria-hidden="true"><path d="M1 9h6" stroke="currentColor" strokeWidth="2" /></svg>
      </button>
      <button type="button" aria-label="Восстановить окно" className={mdi}>
        <svg width="9" height="9" fill="none" stroke="currentColor" aria-hidden="true"><path d="M.5 3.500h5v5h-5zM3 3V1h5v5H6M.5 4.500h5" /></svg>
      </button>
      <button type="button" aria-label="Закрыть окно" className={mdi}>
        <svg width="8" height="8" aria-hidden="true"><path d="M1 1l6 6M7 1L1 7" stroke="currentColor" strokeWidth="2" /></svg>
      </button>
    </div>
  </nav>
);

export default function App() {
  const [chart, setChart] = useState('ES,Daily');

  return (
    <div className='min-h-screen overflow-hidden bg-[#f0f0f0] font-["Open_Sans",sans-serif] text-black'>
      <TitleBar />
      <MenuBar />
      <Toolbar />
      <Chart />
      <div className="mt-[2px] border-b border-white pl-1">
        <TabStrip tabs={CHART_TABS} active={chart} onSelect={setChart}>
          <span className="ml-auto flex h-7 items-center gap-[22px] pr-[15px]">
            <button type="button" aria-label="Назад"><svg width="6" height="10" aria-hidden="true"><path d="M6 0v10L0 5z" /></svg></button>
            <button type="button" aria-label="Вперед"><svg width="6" height="10" aria-hidden="true"><path d="M0 0v10l6-5z" fill="#a0a0a0" /></svg></button>
          </span>
        </TabStrip>
      </div>
      <Terminal />
      <div className="h-[5px]" />
      <StatusBar />
    </div>
  );
}
